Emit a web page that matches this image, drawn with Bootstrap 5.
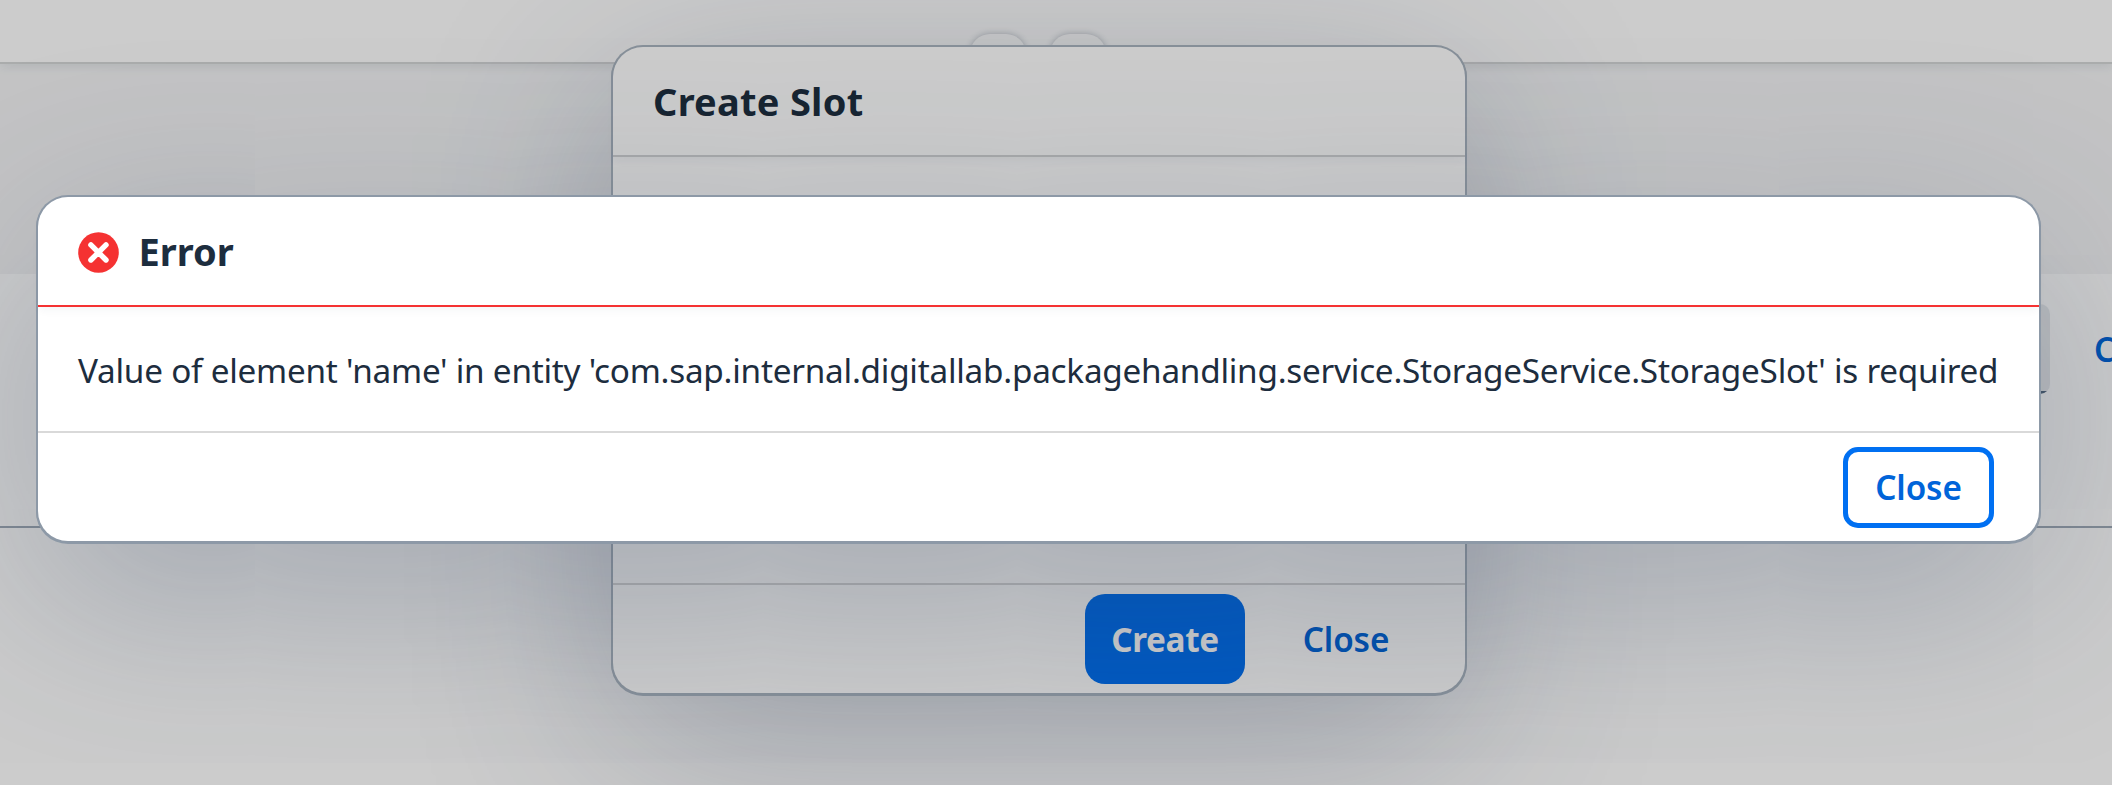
<!DOCTYPE html>
<html lang="en">
<head>
<meta charset="utf-8">
<title>Create Slot</title>
<link rel="stylesheet" href="https://cdn.jsdelivr.net/npm/bootstrap@5.3.0/dist/css/bootstrap.min.css">
<style>
  body { font-family: "Noto Sans", "Open Sans", sans-serif; font-size: 33.3px; line-height: 44px; color: #1d2d3e; background: #fff; }
  .app { height: 785px; }
  .topbar { height: 64px; border-bottom: 2px solid #d5d7d8; box-shadow: 0 2px 10px rgba(34,53,72,.1); }
  .head-area { height: 210px; background: #f5f6f7; }
  .table-area { height: 254px; background: #fff; border-bottom: 2px solid #a0acb8; padding-top: 30px; }
  .pin-btns { gap: 24px; margin-left: -36px; }
  .pin-btn { width: 56px; height: 56px; border-radius: 20px; background: #fff; box-shadow: 0 0 6px rgba(34,53,72,.3); margin-top: 34px; }
  .field-box { width: 250px; height: 90px; border-radius: 10px; background: linear-gradient(#e9ecee 87px, #556b82 87px); margin-right: 44px; }
  .side-link { width: 18px; padding-top: 23px; color: #0064d9; font-weight: 600; white-space: nowrap; }
  .shade { background: rgba(0,0,0,.2); }
  .dlg { background: #fff; border-radius: 30px; }
  .dlg-title { height: 110px; padding-left: 40px; font-size: 38px; font-weight: 700; border-bottom: 2px solid #d2d4d5; border-radius: 30px 30px 0 0; box-shadow: 0 5px 10px -2px rgba(34,53,72,.05); }
  .dlg-foot { height: 110px; border-top: 2px solid #d9d9d9; }
  .dlg-create { width: 852px; height: 646px; margin: 47px 0 0 613px; box-shadow: 0 0 0 2px #a9b4c0, 0 1px 0 2px #a9b4c0, 0 50px 200px rgba(45,65,100,.28); }
  .dlg-create .dlg-title { letter-spacing: .25px; }
  .dlg-error { width: 2001px; height: 344px; margin: 197px 0 0 38px; box-shadow: 0 0 0 2px #8d99a7, 0 1px 0 2px #8d99a7, 0 50px 200px rgba(45,65,100,.29); }
  .dlg-error .dlg-title { border-bottom-color: #f53232; }
  .title-icon { margin: 2px 20px 0 -.5px; }
  .act { font-size: 33.3px; line-height: 44px; font-weight: 600; color: #0064d9; padding: 0; letter-spacing: -.1px; }
  .act-create { width: 160px; height: 90px; border-radius: 20px; background: #0070f2; color: #fff; font-weight: 700; letter-spacing: -.4px; margin-right: 21px; }
  .act-plain { width: 160px; margin-right: 39px; }
  .act-focus { width: 151px; height: 81px; border: 5px solid #0070f2; border-radius: 15px; margin-right: 45px; }
  .msg { padding: 2px 0 0 40px; letter-spacing: -.245px; white-space: nowrap; }
</style>
</head>
<body>
<div class="app position-relative overflow-hidden">
  <div class="topbar position-relative d-flex justify-content-center">
    <div class="pin-btns d-flex">
      <div class="pin-btn"></div>
      <div class="pin-btn"></div>
    </div>
  </div>
  <div class="head-area"></div>
  <div class="table-area d-flex justify-content-end">
    <div class="field-box"></div>
    <div class="side-link">Create</div>
  </div>

  <section class="dlg dlg-create d-flex flex-column position-absolute top-0 start-0">
    <div class="dlg-title d-flex align-items-center">Create Slot</div>
    <div class="flex-grow-1"></div>
    <div class="dlg-foot d-flex align-items-center justify-content-end">
      <button class="btn act act-create">Create</button>
      <button class="btn act act-plain border-0">Close</button>
    </div>
  </section>

  <div class="shade position-absolute top-0 start-0 w-100 h-100"></div>

  <section class="dlg dlg-error d-flex flex-column position-absolute top-0 start-0">
    <div class="dlg-title d-flex align-items-center">
      <svg width="41" height="41" viewBox="0 0 41 41" class="title-icon flex-shrink-0">
        <circle cx="20.5" cy="20.5" r="20.3" fill="#f53232"/>
        <path d="M12.9 12.9 28 28M28 12.9 12.9 28" stroke="#fff" stroke-width="5.4" stroke-linecap="round"/>
      </svg>
      <span>Error</span>
    </div>
    <div class="msg flex-grow-1 d-flex align-items-center">Value of element 'name' in entity 'com.sap.internal.digitallab.packagehandling.service.StorageService.StorageSlot' is required</div>
    <div class="dlg-foot d-flex align-items-center justify-content-end">
      <button class="btn act act-focus">Close</button>
    </div>
  </section>
</div>
<script src="https://cdn.jsdelivr.net/npm/bootstrap@5.3.0/dist/js/bootstrap.bundle.min.js"></script>
</body>
</html>
